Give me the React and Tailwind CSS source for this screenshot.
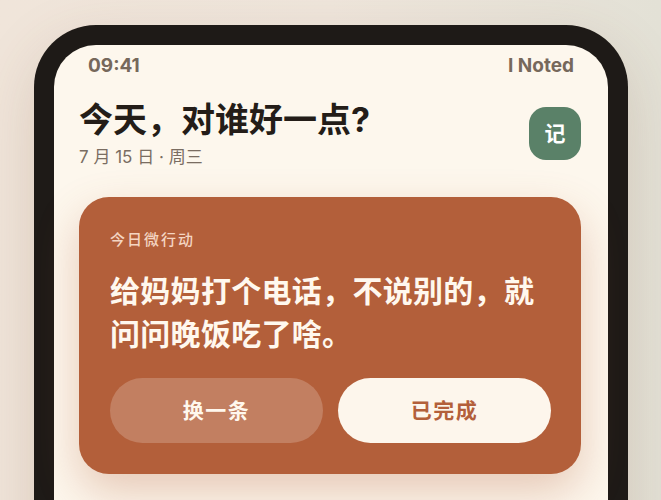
import React from "react";

const font = { fontFamily: '"Inter", "Noto Sans CJK SC", sans-serif' };

function StatusBar() {
  return (
    <div className="flex justify-between px-[34px] pt-[10px] h-[32px] text-[19px] leading-[22px] font-bold text-[#76685b]">
      <span>09:41</span>
      <span>I Noted</span>
    </div>
  );
}

function Header() {
  return (
    <div className="flex items-start justify-between pl-[25px] pr-[27px] mt-[22px]">
      <div>
        <h1 className="text-[34px] leading-[42px] font-bold text-[#241d18]">
          今天，对谁好一点?
        </h1>
        <p className="mt-[6px] text-[17px] leading-[20px] text-[#7a6d62]">
          7 月 15 日 · 周三
        </p>
      </div>
      <button className="mt-[8px] w-[52px] h-[53px] rounded-[17px] bg-[#5a8168] text-white text-[21px] font-bold flex items-center justify-center">
        记
      </button>
    </div>
  );
}

function ActionCard() {
  return (
    <div className="mt-[30px] ml-[25px] mr-[27px] rounded-[30px] bg-[#b35f3a] pt-[33px] pb-[31px] pl-[31px] pr-[30px] shadow-[0_18px_44px_rgba(179,95,58,0.3)]">
      <div className="text-[15px] leading-[20px] tracking-[2px] font-medium text-[#f4d5c2]">
        今日微行动
      </div>
      <p className="mt-[20px] text-[30px] leading-[43px] tracking-[0.3px] font-bold text-[#fff8ee]">
        给妈妈打个电话，不说别的，就问问晚饭吃了啥。
      </p>
      <div className="mt-[22px] grid grid-cols-2 gap-[15px]">
        <button className="h-[65px] rounded-full bg-white/20 text-[21px] font-bold tracking-[1.5px] text-[#fff8ee]">
          换一条
        </button>
        <button className="h-[65px] rounded-full bg-[#fdf6ec] text-[21px] font-bold tracking-[1.5px] text-[#b35f3a]">
          已完成
        </button>
      </div>
    </div>
  );
}

export default function App() {
  return (
    <div
      style={font}
      className="h-[500px] overflow-hidden bg-gradient-to-r from-[#f0e5da] via-[#efe6dc] to-[#e3e1d6] pt-[25px] pl-[34px]"
    >
      <div className="w-[594px] h-[620px] rounded-t-[62px] bg-[#1e1a17] px-[20px] pt-[20px] shadow-[0_20px_60px_rgba(120,80,50,0.18)]">
        <div className="h-full rounded-t-[42px] bg-[#fdf7ed]">
          <StatusBar />
          <Header />
          <ActionCard />
        </div>
      </div>
    </div>
  );
}
